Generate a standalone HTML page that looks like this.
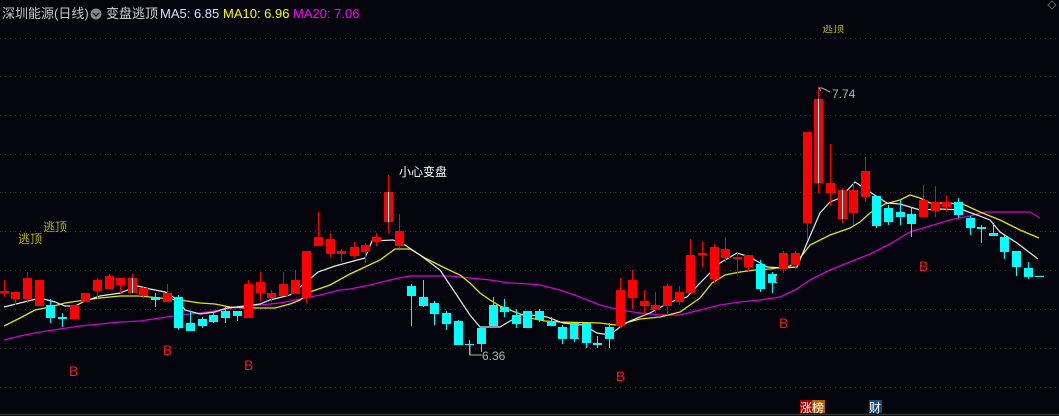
<!DOCTYPE html>
<html><head><meta charset="utf-8"><style>
html,body{margin:0;padding:0;background:#04040d;width:1059px;height:416px;overflow:hidden}
svg{display:block}
text{font-family:"Liberation Sans","Noto Sans CJK SC",sans-serif}
</style></head><body>
<svg width="1059" height="416" viewBox="0 0 1059 416" xmlns="http://www.w3.org/2000/svg">
<defs><clipPath id="tc"><rect x="800" y="25" width="60" height="20"/></clipPath></defs>
<rect width="1059" height="416" fill="#04040d"/>
<g stroke="#3a3a44" stroke-width="1" stroke-dasharray="1 4">
<line x1="0" y1="38.5" x2="1059" y2="38.5"/><line x1="0" y1="76.5" x2="1059" y2="76.5"/>
<line x1="0" y1="115.5" x2="1059" y2="115.5"/><line x1="0" y1="154.5" x2="1059" y2="154.5"/>
<line x1="0" y1="192.5" x2="1059" y2="192.5"/><line x1="0" y1="231.5" x2="1059" y2="231.5"/>
<line x1="0" y1="270.5" x2="1059" y2="270.5"/><line x1="0" y1="309.5" x2="1059" y2="309.5"/>
<line x1="0" y1="348.5" x2="1059" y2="348.5"/><line x1="0" y1="387.5" x2="1059" y2="387.5"/>
</g>
<line x1="0" y1="414.5" x2="1059" y2="414.5" stroke="#333" stroke-width="1.5"/>
<polyline fill="none" stroke="#d800d8" stroke-width="1.3" points="4,340 20,336 40,332 60,329 80,326 100,324 120,322 140,321 160,318 180,315 200,313 220,310 240,307 260,305 280,303 300,299 320,295 340,290 350,289 370,285 390,280 410,276 430,276 450,276 470,278 490,280 510,283 530,284 540,285 560,290 580,297 600,305 620,310 640,313 660,315 680,315 700,310 720,305 740,302 760,300 780,297 795,290 810,280 830,270 850,262 870,254 890,244 910,232 930,226 950,220 970,216 985,212 1000,212 1030,212 1040,218"/>
<polyline fill="none" stroke="#e6e600" stroke-width="1.3" points="4,326 20,318 35,310 50,307 65,303 85,300 100,298 120,296 140,296 160,298 180,300 200,303 215,304 230,307 245,308 275,308 290,304 300,300 310,292 330,285 350,274 365,267 380,260 395,249 410,249 425,258 445,268 460,275 470,283 480,293 490,300 500,306 515,312 530,318 545,321 560,322 600,323 615,325 625,323 640,319 660,317 680,312 690,305 700,298 712,283 725,275 740,272 755,270 770,269 790,266 800,258 810,245 830,235 850,228 860,222 870,213 885,204 900,200 910,195 920,198 930,203 950,203 965,205 980,212 1000,220 1020,230 1039,238"/>
<polyline fill="none" stroke="#e8e8e8" stroke-width="1.2" points="4,307 40,298 55,302 65,306 75,306 85,301 100,296 120,293 138,286 150,289 165,292 178,300 185,310 200,314 215,312 227,308 245,306 260,304 270,300 290,295 305,283 318,272 335,266 350,262 365,258 372,241 393,240 405,245 420,255 440,270 450,285 460,300 470,315 480,327 500,327 517,317 523,314 547,317 563,323 583,325 597,333 610,335 620,327 630,321 650,313 670,302 687,297 700,283 720,263 737,253 750,257 767,267 783,268 797,267 807,243 820,213 830,202 840,198 855,182 870,192 887,203 900,204 920,210 940,209 963,210 977,215 990,220 1000,232 1017,243 1038,259"/>
<g fill="#ff0000" stroke="#ff0000">
<line x1="4.5" y1="280" x2="4.5" y2="297"/><rect x="0" y="291" width="9" height="2" stroke="none"/>
<line x1="15.5" y1="292" x2="15.5" y2="305"/><rect x="11" y="292" width="9" height="7" stroke="none"/>
<line x1="27.5" y1="272" x2="27.5" y2="303"/><rect x="23" y="278" width="9" height="21" stroke="none"/>
<rect x="35" y="280" width="9" height="26" stroke="none"/>
<rect x="70" y="305" width="9" height="14" stroke="none"/>
<rect x="81" y="293" width="9" height="9" stroke="none"/>
<line x1="97.5" y1="278" x2="97.5" y2="299"/><rect x="93" y="280" width="9" height="11" stroke="none"/>
<line x1="109.5" y1="274" x2="109.5" y2="289"/><rect x="105" y="276" width="9" height="13" stroke="none"/>
<line x1="120.5" y1="278" x2="120.5" y2="293"/><rect x="116" y="278" width="9" height="7" stroke="none"/>
<line x1="132.5" y1="274" x2="132.5" y2="293"/><rect x="128" y="278" width="9" height="15" stroke="none"/>
<line x1="143.5" y1="286" x2="143.5" y2="298"/><rect x="139" y="288" width="9" height="8" stroke="none"/>
<line x1="167.5" y1="284" x2="167.5" y2="302"/><rect x="163" y="293" width="9" height="9" stroke="none"/>
<line x1="248.5" y1="280" x2="248.5" y2="318"/><rect x="244" y="284" width="9" height="34" stroke="none"/>
<line x1="260.5" y1="272" x2="260.5" y2="301"/><rect x="256" y="282" width="9" height="11" stroke="none"/>
<line x1="271.5" y1="290" x2="271.5" y2="302"/><rect x="267" y="293" width="9" height="5" stroke="none"/>
<line x1="283.5" y1="272" x2="283.5" y2="296"/><rect x="279" y="284" width="9" height="12" stroke="none"/>
<line x1="295.5" y1="270" x2="295.5" y2="294"/><rect x="291" y="280" width="9" height="14" stroke="none"/>
<line x1="306.5" y1="251" x2="306.5" y2="303"/><rect x="302" y="251" width="9" height="47" stroke="none"/>
<line x1="318.5" y1="212" x2="318.5" y2="246"/><rect x="314" y="237" width="9" height="9" stroke="none"/>
<line x1="330.5" y1="233" x2="330.5" y2="257"/><rect x="326" y="239" width="9" height="15" stroke="none"/>
<line x1="341.5" y1="249" x2="341.5" y2="262"/><rect x="337" y="251" width="9" height="3" stroke="none"/>
<line x1="354.5" y1="242" x2="354.5" y2="258"/><rect x="350" y="247" width="9" height="9" stroke="none"/>
<line x1="365.5" y1="243" x2="365.5" y2="263"/><rect x="361" y="245" width="9" height="7" stroke="none"/>
<line x1="376.5" y1="233" x2="376.5" y2="246"/><rect x="372" y="237" width="9" height="5" stroke="none"/>
<line x1="388.5" y1="175" x2="388.5" y2="233"/><rect x="384" y="192" width="9" height="30" stroke="none"/>
<line x1="399.5" y1="214" x2="399.5" y2="248"/><rect x="395" y="231" width="9" height="15" stroke="none"/>
<line x1="620.5" y1="278" x2="620.5" y2="328"/><rect x="616" y="290" width="9" height="36" stroke="none"/>
<line x1="632.5" y1="270" x2="632.5" y2="309"/><rect x="628" y="280" width="9" height="18" stroke="none"/>
<line x1="644.5" y1="290" x2="644.5" y2="315"/><rect x="640" y="301" width="9" height="5" stroke="none"/>
<line x1="655.5" y1="292" x2="655.5" y2="313"/><rect x="651" y="305" width="9" height="5" stroke="none"/>
<line x1="667.5" y1="284" x2="667.5" y2="315"/><rect x="663" y="286" width="9" height="20" stroke="none"/>
<line x1="679.5" y1="286" x2="679.5" y2="305"/><rect x="675" y="292" width="9" height="10" stroke="none"/>
<line x1="690.5" y1="239" x2="690.5" y2="293"/><rect x="686" y="255" width="9" height="38" stroke="none"/>
<line x1="702.5" y1="241" x2="702.5" y2="267"/><rect x="698" y="253" width="9" height="2" stroke="none"/>
<line x1="714.5" y1="244" x2="714.5" y2="283"/><rect x="710" y="247" width="9" height="32" stroke="none"/>
<line x1="725.5" y1="237" x2="725.5" y2="262"/><rect x="721" y="249" width="9" height="9" stroke="none"/>
<line x1="737.5" y1="253" x2="737.5" y2="274"/><rect x="733" y="257" width="9" height="2" stroke="none"/>
<line x1="748.5" y1="255" x2="748.5" y2="272"/><rect x="744" y="255" width="9" height="12" stroke="none"/>
<line x1="783.5" y1="251" x2="783.5" y2="273"/><rect x="779" y="253" width="9" height="16" stroke="none"/>
<line x1="795.5" y1="251" x2="795.5" y2="269"/><rect x="791" y="253" width="9" height="12" stroke="none"/>
<line x1="807.5" y1="132" x2="807.5" y2="240"/><rect x="803" y="132" width="9" height="91" stroke="none"/>
<line x1="818.5" y1="87" x2="818.5" y2="193"/><rect x="814" y="99" width="9" height="84" stroke="none"/>
<line x1="830.5" y1="144" x2="830.5" y2="206"/><rect x="826" y="183" width="9" height="10" stroke="none"/>
<line x1="842.5" y1="188" x2="842.5" y2="223"/><rect x="838" y="190" width="9" height="29" stroke="none"/>
<line x1="853.5" y1="182" x2="853.5" y2="225"/><rect x="849" y="190" width="9" height="23" stroke="none"/>
<line x1="865.5" y1="157" x2="865.5" y2="202"/><rect x="861" y="171" width="9" height="26" stroke="none"/>
<line x1="923.5" y1="185" x2="923.5" y2="217"/><rect x="919" y="200" width="9" height="17" stroke="none"/>
<line x1="935.5" y1="186" x2="935.5" y2="217"/><rect x="931" y="202" width="9" height="9" stroke="none"/>
<line x1="946.5" y1="196" x2="946.5" y2="212"/><rect x="942" y="202" width="9" height="5" stroke="none"/>
</g>
<g stroke="#5ff" stroke-width="1">
<line x1="388.5" y1="192" x2="388.5" y2="222"/><line x1="818.5" y1="99" x2="818.5" y2="183"/>
<line x1="132.5" y1="278" x2="132.5" y2="293"/><line x1="842.5" y1="190" x2="842.5" y2="219"/>
</g>
<g fill="#00ffff" stroke="#00ffff">
<line x1="50.5" y1="299" x2="50.5" y2="323"/><rect x="46" y="305" width="9" height="13" stroke="none"/>
<line x1="62.5" y1="313" x2="62.5" y2="327"/><rect x="58" y="317" width="9" height="2" stroke="none"/>
<line x1="155.5" y1="293" x2="155.5" y2="307"/><rect x="151" y="297" width="9" height="3" stroke="none"/>
<line x1="178.5" y1="295" x2="178.5" y2="330"/><rect x="174" y="297" width="9" height="31" stroke="none"/>
<line x1="190.5" y1="311" x2="190.5" y2="331"/><rect x="186" y="323" width="9" height="8" stroke="none"/>
<line x1="202.5" y1="317" x2="202.5" y2="328"/><rect x="198" y="319" width="9" height="7" stroke="none"/>
<line x1="213.5" y1="313" x2="213.5" y2="323"/><rect x="209" y="315" width="9" height="7" stroke="none"/>
<line x1="225.5" y1="307" x2="225.5" y2="323"/><rect x="221" y="311" width="9" height="7" stroke="none"/>
<line x1="237.5" y1="311" x2="237.5" y2="321"/><rect x="233" y="311" width="9" height="5" stroke="none"/>
<line x1="411.5" y1="284" x2="411.5" y2="326"/><rect x="407" y="286" width="9" height="10" stroke="none"/>
<line x1="423.5" y1="280" x2="423.5" y2="307"/><rect x="419" y="297" width="9" height="9" stroke="none"/>
<line x1="434.5" y1="301" x2="434.5" y2="325"/><rect x="430" y="303" width="9" height="11" stroke="none"/>
<line x1="446.5" y1="311" x2="446.5" y2="330"/><rect x="442" y="313" width="9" height="11" stroke="none"/>
<line x1="458.5" y1="320" x2="458.5" y2="345"/><rect x="454" y="321" width="9" height="24" stroke="none"/>
<line x1="469.5" y1="340" x2="469.5" y2="355"/><rect x="465" y="344" width="9" height="1" stroke="none"/>
<line x1="481.5" y1="327" x2="481.5" y2="352"/><rect x="477" y="328" width="9" height="16" stroke="none"/>
<line x1="493.5" y1="297" x2="493.5" y2="326"/><rect x="489" y="305" width="9" height="21" stroke="none"/>
<line x1="504.5" y1="299" x2="504.5" y2="317"/><rect x="500" y="307" width="9" height="5" stroke="none"/>
<line x1="516.5" y1="309" x2="516.5" y2="328"/><rect x="512" y="315" width="9" height="9" stroke="none"/>
<rect x="523" y="311" width="9" height="17" stroke="none"/>
<line x1="539.5" y1="309" x2="539.5" y2="322"/><rect x="535" y="311" width="9" height="9" stroke="none"/>
<line x1="551.5" y1="317" x2="551.5" y2="326"/><rect x="547" y="321" width="9" height="5" stroke="none"/>
<line x1="562.5" y1="325" x2="562.5" y2="344"/><rect x="558" y="327" width="9" height="12" stroke="none"/>
<line x1="574.5" y1="323" x2="574.5" y2="342"/><rect x="570" y="323" width="9" height="16" stroke="none"/>
<line x1="586.5" y1="323" x2="586.5" y2="348"/><rect x="582" y="323" width="9" height="20" stroke="none"/>
<line x1="597.5" y1="336" x2="597.5" y2="348"/><rect x="593" y="343" width="9" height="2" stroke="none"/>
<line x1="609.5" y1="323" x2="609.5" y2="348"/><rect x="605" y="327" width="9" height="12" stroke="none"/>
<line x1="760.5" y1="260" x2="760.5" y2="292"/><rect x="756" y="264" width="9" height="25" stroke="none"/>
<line x1="772.5" y1="272" x2="772.5" y2="293"/><rect x="768" y="274" width="9" height="9" stroke="none"/>
<line x1="876.5" y1="196" x2="876.5" y2="228"/><rect x="872" y="196" width="9" height="30" stroke="none"/>
<line x1="888.5" y1="205" x2="888.5" y2="225"/><rect x="884" y="208" width="9" height="14" stroke="none"/>
<line x1="900.5" y1="199" x2="900.5" y2="225"/><rect x="896" y="212" width="9" height="5" stroke="none"/>
<line x1="911.5" y1="207" x2="911.5" y2="237"/><rect x="907" y="214" width="9" height="10" stroke="none"/>
<line x1="958.5" y1="198" x2="958.5" y2="218"/><rect x="954" y="202" width="9" height="13" stroke="none"/>
<line x1="970.5" y1="216" x2="970.5" y2="235"/><rect x="966" y="218" width="9" height="10" stroke="none"/>
<line x1="981.5" y1="225" x2="981.5" y2="243"/><rect x="977" y="227" width="9" height="2" stroke="none"/>
<line x1="993.5" y1="223" x2="993.5" y2="236"/><rect x="989" y="233" width="9" height="3" stroke="none"/>
<line x1="1004.5" y1="235" x2="1004.5" y2="259"/><rect x="1000" y="237" width="9" height="15" stroke="none"/>
<line x1="1016.5" y1="251" x2="1016.5" y2="276"/><rect x="1012" y="251" width="9" height="16" stroke="none"/>
<line x1="1028.5" y1="262" x2="1028.5" y2="279"/><rect x="1024" y="268" width="9" height="9" stroke="none"/>
<rect x="1035" y="276" width="9" height="1" stroke="none"/>
</g>
<g stroke="#ff0000"><line x1="578.5" y1="326" x2="578.5" y2="338"/><line x1="776.5" y1="276" x2="776.5" y2="282"/></g>
<g font-size="12" fill="#e6e600" stroke="#333300" stroke-width="0.3">
<text x="18" y="243">逃顶</text><text x="43" y="231">逃顶</text>
<text x="822" y="32" font-size="11" clip-path="url(#tc)">逃顶</text>
</g>
<text x="399" y="176" font-size="12" fill="#ffffff">小心变盘</text>
<g font-size="14" fill="#ff1a1a">
<text x="69" y="376">B</text><text x="163" y="355">B</text><text x="244" y="370">B</text>
<text x="616" y="381">B</text><text x="779" y="328">B</text><text x="919" y="271">B</text>
</g>
<g stroke="#aaa" fill="none" stroke-width="1">
<polyline points="821,91 819,88 822,88 830,92"/>
<polyline points="470,345 470,355 482,355"/>
</g>
<text x="832" y="98" font-size="12" fill="#b4b4b4">7.74</text>
<text x="482" y="360" font-size="12" fill="#b4b4b4">6.36</text>
<rect x="800" y="400" width="12" height="13" fill="#a00000"/>
<rect x="812" y="400" width="13" height="13" fill="#b06000"/>
<rect x="869" y="400" width="13" height="13" fill="#1a4a7a"/>
<g font-size="12" fill="#fff"><text x="800" y="412">涨</text><text x="812" y="412">榜</text><text x="869" y="412">财</text></g>
<g font-size="13">
<text x="2" y="18" fill="#c8c8c8">深圳能源(日线)</text>
<circle cx="96" cy="14" r="5.5" fill="#888"/>
<polyline points="93,13 96,16 99,13" fill="none" stroke="#222" stroke-width="1.5"/>
<text x="106" y="18" fill="#d8d8d8">变盘逃顶</text>
<text x="160" y="18" fill="#d0e8ff">MA5: 6.85</text>
<text x="223" y="18" fill="#ffff00">MA10: 6.96</text>
<text x="293" y="18" fill="#ff00ff">MA20: 7.06</text>
</g>
<path d="M1052,1 L1056,5 L1052,9 L1048,5 Z" fill="none" stroke="#777" stroke-width="0.8"/>
</svg>
</body></html>
